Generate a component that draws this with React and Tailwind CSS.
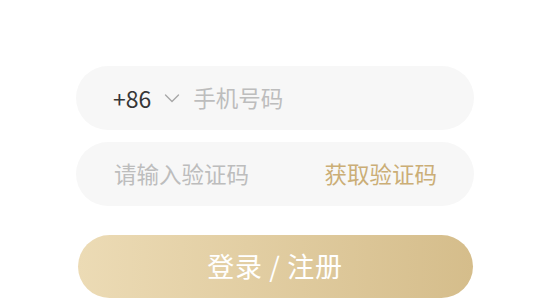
import React, { useState } from 'react';

const font = { fontFamily: '"Noto Sans CJK SC", "Noto Sans", sans-serif' };

const LoginForm = () => {
  const [phone, setPhone] = useState('');
  const [code, setCode] = useState('');

  return (
    <div className="min-h-screen bg-white" style={font}>
      <div className="mx-auto w-[398px] pt-[66px] flex flex-col">
        <div className="h-16 rounded-full bg-[#f7f7f7] flex items-center pl-[37px] pr-6">
          <span className="text-[23px] text-[#363636] leading-none">+86</span>
          <svg className="ml-[13px] w-[16px] h-[16px]" viewBox="0 0 16 16" fill="none" stroke="#a8a8a8" strokeWidth="1.4" strokeLinecap="round" strokeLinejoin="round">
            <path d="M1.5 5l6.5 6.5 6.5-6.5" />
          </svg>
          <input
            value={phone}
            onChange={(e) => setPhone(e.target.value)}
            placeholder="手机号码"
            className="ml-[13px] flex-1 bg-transparent outline-none text-[22.5px] text-[#333] placeholder:text-[#bdbdbd]"
          />
        </div>

        <div className="mt-3 h-16 rounded-full bg-[#f7f7f7] flex items-center pl-[38px] pr-[37px]">
          <input
            value={code}
            onChange={(e) => setCode(e.target.value)}
            placeholder="请输入验证码"
            className="flex-1 min-w-0 bg-transparent outline-none text-[22.5px] text-[#333] placeholder:text-[#bdbdbd]"
          />
          <button className="text-[22.5px] text-[#cbae76]">获取验证码</button>
        </div>

        <button className="mt-[29px] mx-auto w-[395px] h-[63px] rounded-full bg-gradient-to-r from-[#ecdbb5] to-[#d5bd8b] text-white text-[27px] tracking-wide">
          登录 / 注册
        </button>
      </div>
    </div>
  );
};

export default function App() {
  return <LoginForm />;
}
